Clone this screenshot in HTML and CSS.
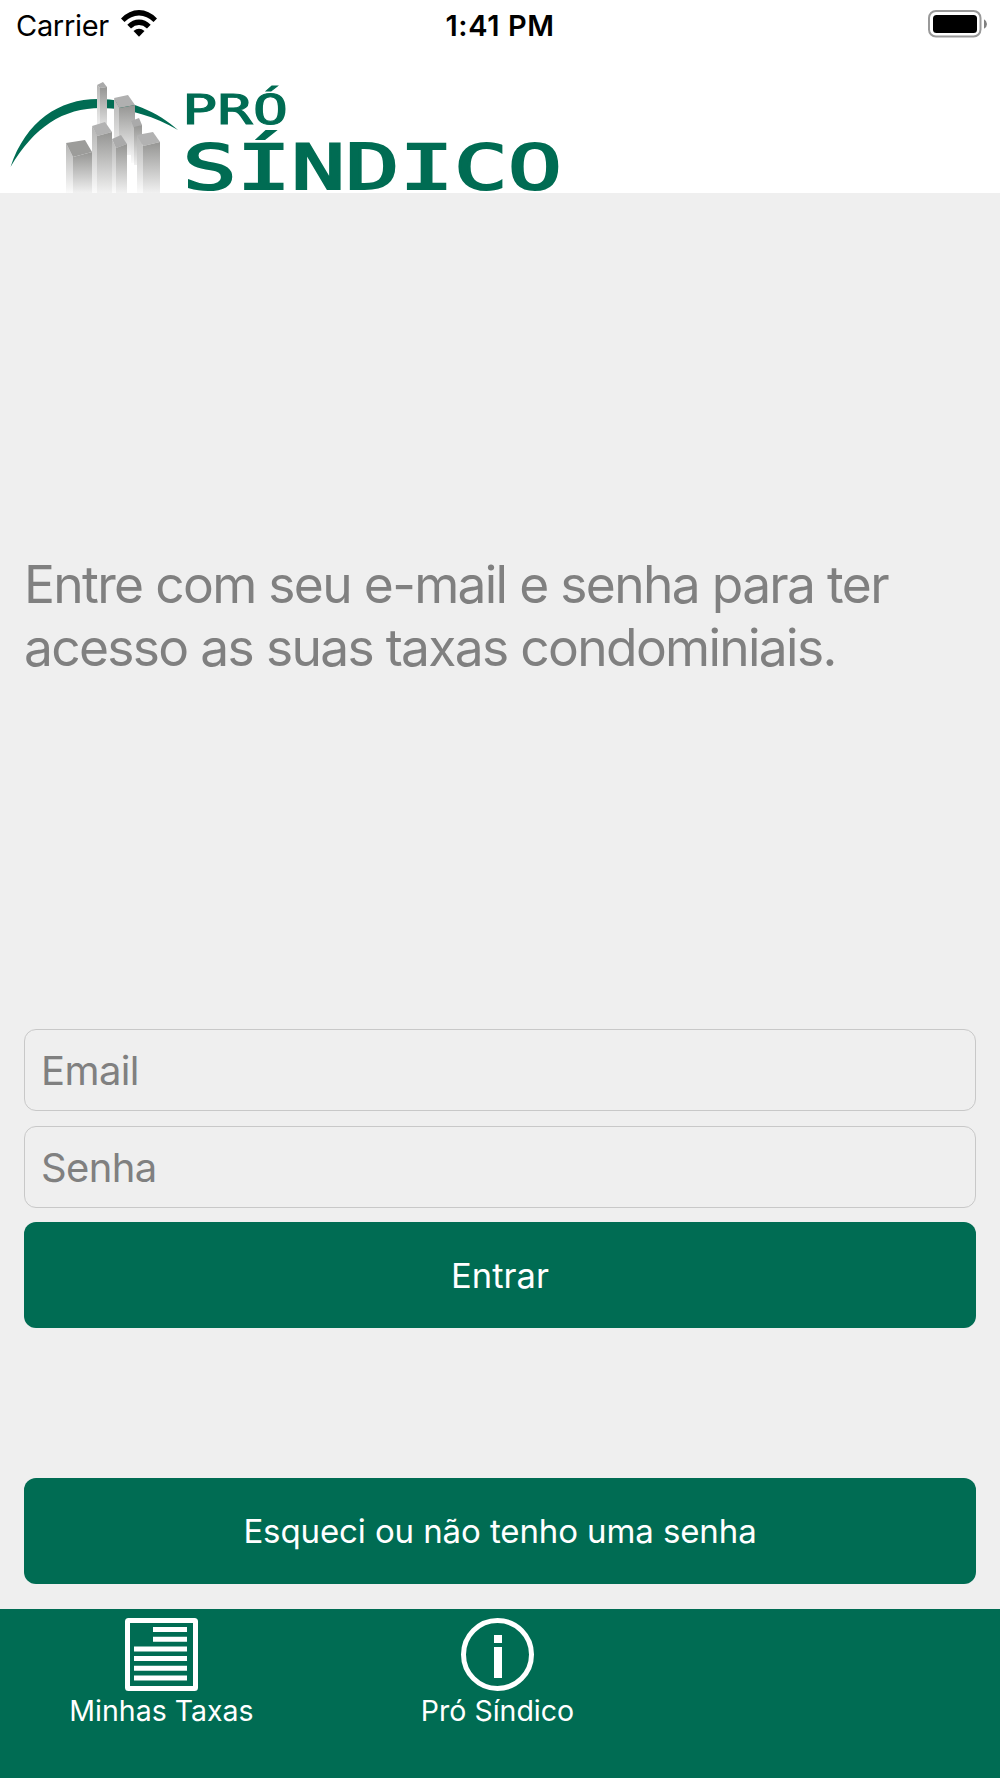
FILE: index.html
```
<!DOCTYPE html>
<html lang="pt-BR">
<head>
    <meta charset="UTF-8">
    <meta name="viewport" content="width=device-width, initial-scale=1.0">
    <title>Pró Síndico</title>
    <link rel="stylesheet" href="styles.css">
</head>
<body>
    <div class="status-bar">
        <div class="carrier">
            <span>Carrier</span>
            <svg class="wifi" width="36" height="27" viewBox="0 0 36 27">
                <path d="M0 8.500Q8 0 18 0T36 8.500L32.500 12Q26 5.500 18 5.500T3.500 12Z"/>
                <path d="M6.300 14.800Q11.500 9.500 18 9.500T29.700 14.800L26 18.400Q22.300 15 18 15T10 18.400Z"/>
                <path d="M12.500 21Q18 16.500 23.500 21L18 26.700Z"/>
            </svg>
        </div>
        <span class="time">1:41 PM</span>
        <div class="battery">
            <svg width="60" height="28" viewBox="0 0 60 28">
                <rect x="1" y="1" width="51.500" height="25.500" rx="7" fill="none" stroke="#999" stroke-width="2"/>
                <rect x="5" y="5" width="44" height="18" rx="3.500"/>
                <path d="M56 9.300Q59 11 59 14T56 18.700Z" fill="#808080"/>
            </svg>
        </div>
    </div>

    <header class="header">
        <svg class="logo" width="570" height="123" viewBox="0 70 570 123">
            <defs>
                <linearGradient id="front" x1="0" y1="0" x2="0" y2="1">
                    <stop offset="0" stop-color="#959593"/>
                    <stop offset="1" stop-color="#f1f1f1"/>
                </linearGradient>
                <linearGradient id="side" x1="0" y1="0" x2="0" y2="1">
                    <stop offset="0" stop-color="#b5b5b4"/>
                    <stop offset="1" stop-color="#fbfbfb"/>
                </linearGradient>
            </defs>
            <path d="M10.500 167C26 121 59 99 98 99C129 99 158 112 178 130C155 117 130 108 101 108C63 108 34 127 10.500 167Z" fill="#006c53"/>
            <!-- buildings, back to front -->
            <path d="M97 85L100 88V134H97Z" fill="url(#side)"/>
            <path d="M97 85L103 82L107 87L100 88Z" fill="#aaa"/>
            <path d="M100 88L107 87V134H100Z" fill="url(#front)"/>
            <path d="M114 98L119 107V160H114Z" fill="url(#side)"/>
            <path d="M114 98L128 95L135 105L119 108Z" fill="#b0b0b0"/>
            <path d="M119 108L135 105V155H119Z" fill="url(#front)"/>
            <path d="M131 121L139 118L142 125L134 129Z" fill="#aaa"/>
            <path d="M131 121L134 129V163H131Z" fill="url(#side)"/>
            <path d="M134 127L142 125V165H134Z" fill="url(#front)"/>
            <path d="M92 126L97 135V193H92Z" fill="url(#side)"/>
            <path d="M92 126L105 122L112 132L97 136Z" fill="#b2b2b2"/>
            <path d="M97 136L112 132V193H97Z" fill="url(#front)"/>
            <path d="M112 139L116 148V193H112Z" fill="url(#side)"/>
            <path d="M112 139L121 135L127 144L116 148Z" fill="#aaa"/>
            <path d="M116 148L127 144V193H116Z" fill="url(#front)"/>
            <path d="M66 143L73 157V193H66Z" fill="url(#side)"/>
            <path d="M66 143L85 140L92 152L73 157Z" fill="#9c9c9a"/>
            <path d="M73 157L92 152V193H73Z" fill="url(#front)"/>
            <path d="M137 135L143 146V193H137Z" fill="url(#side)"/>
            <path d="M137 135L153 132L160 142L143 146Z" fill="#b2b2b2"/>
            <path d="M143 146L160 142V193H143Z" fill="url(#front)"/>
            <text class="logo-text" transform="translate(182 123.500) scale(1.450 1)" font-size="40.500" stroke-width="1">PRÓ</text>
            <text class="logo-text" transform="translate(182.500 188.500) scale(1.430 1)" font-size="63" stroke-width="2">SÍNDICO</text>
        </svg>
    </header>

    <main class="content">
        <p class="message">Entre com seu e-mail e senha para ter acesso as suas taxas condominiais.</p>
        <form class="login">
            <input class="field" type="email" placeholder="Email">
            <input class="field senha" type="password" placeholder="Senha">
            <button class="btn entrar" type="button">Entrar</button>
            <button class="btn esqueci" type="button">Esqueci ou não tenho uma senha</button>
        </form>
    </main>

    <nav class="tab-bar">
        <a class="tab">
            <svg width="73" height="73" viewBox="0 0 73 73">
                <rect x="2.500" y="2.500" width="68" height="68" rx="1" fill="none" stroke="#fff" stroke-width="5"/>
                <path d="M28 11.500H62M28 21.200H62M9 30.900H62M9 40.600H62M9 50.200H62M9 59.900H62" stroke="#fff" stroke-width="5"/>
            </svg>
            <span>Minhas Taxas</span>
        </a>
        <a class="tab">
            <svg width="73" height="73" viewBox="0 0 73 73">
                <circle cx="36.500" cy="36.500" r="34" fill="none" stroke="#fff" stroke-width="5"/>
                <path d="M33 17h8v8h-8zM33 29h8v31h-8z" fill="#fff"/>
            </svg>
            <span>Pró Síndico</span>
        </a>
    </nav>
</body>
</html>
```
FILE: styles.css
```
* {
    box-sizing: border-box;
}
body {
    margin: 0;
    width: 1000px;
    height: 1778px;
    display: flex;
    flex-direction: column;
    overflow: hidden;
    background-color: #efefef;
    font-family: Inter, "Liberation Sans", sans-serif;
}
.status-bar {
    height: 70px;
    padding: 8px 12px 0 16px;
    display: grid;
    grid-template-columns: 1fr auto 1fr;
    align-items: start;
    background-color: #fff;
    font-size: 29px;
    line-height: 35px;
}
.carrier {
    display: flex;
    gap: 12px;
    letter-spacing: -0.3px;
}
.wifi {
    margin-top: 2px;
}
.time {
    margin-right: 4px;
    font-weight: 600;
    letter-spacing: 0.6px;
}
.battery {
    display: flex;
    justify-content: flex-end;
    padding-top: 2px;
}
.header {
    height: 123px;
    background-color: #fff;
}
.logo {
    display: block;
    overflow: visible;
}
.logo-text {
    font-family: "DejaVu Sans Mono", monospace;
    fill: #006c53;
    stroke: #006c53;
}
.content {
    flex: 1;
    padding: 0 24px;
}
.message {
    margin: 360px 0 0;
    height: 476px;
    color: #808080;
    font-size: 51.5px;
    letter-spacing: -1.68px;
    line-height: 63px;
}
.login {
    display: flex;
    flex-direction: column;
}
.field {
    height: 82px;
    padding: 0 16px;
    border: 1px solid #c8c8c8;
    border-radius: 12px;
    background-color: transparent;
    font-family: inherit;
    font-size: 40px;
    letter-spacing: -0.6px;
}
.field::placeholder {
    color: #808080;
    opacity: 1;
}
.senha {
    margin: 15px 0 14px;
}
.btn {
    height: 106px;
    padding: 0;
    border: none;
    border-radius: 12px;
    background-color: #006c53;
    color: #fff;
    font-family: inherit;
    font-size: 34.5px;
}
.esqueci {
    margin-top: 150px;
    font-size: 33px;
    letter-spacing: -0.1px;
}
.tab-bar {
    height: 169px;
    padding-top: 9px;
    display: grid;
    grid-template-columns: repeat(3, 323px);
    column-gap: 13px;
    background-color: #006c53;
}
.tab {
    display: flex;
    flex-direction: column;
    align-items: center;
    color: #fff;
    font-size: 28.5px;
    line-height: 40px;
}
```
